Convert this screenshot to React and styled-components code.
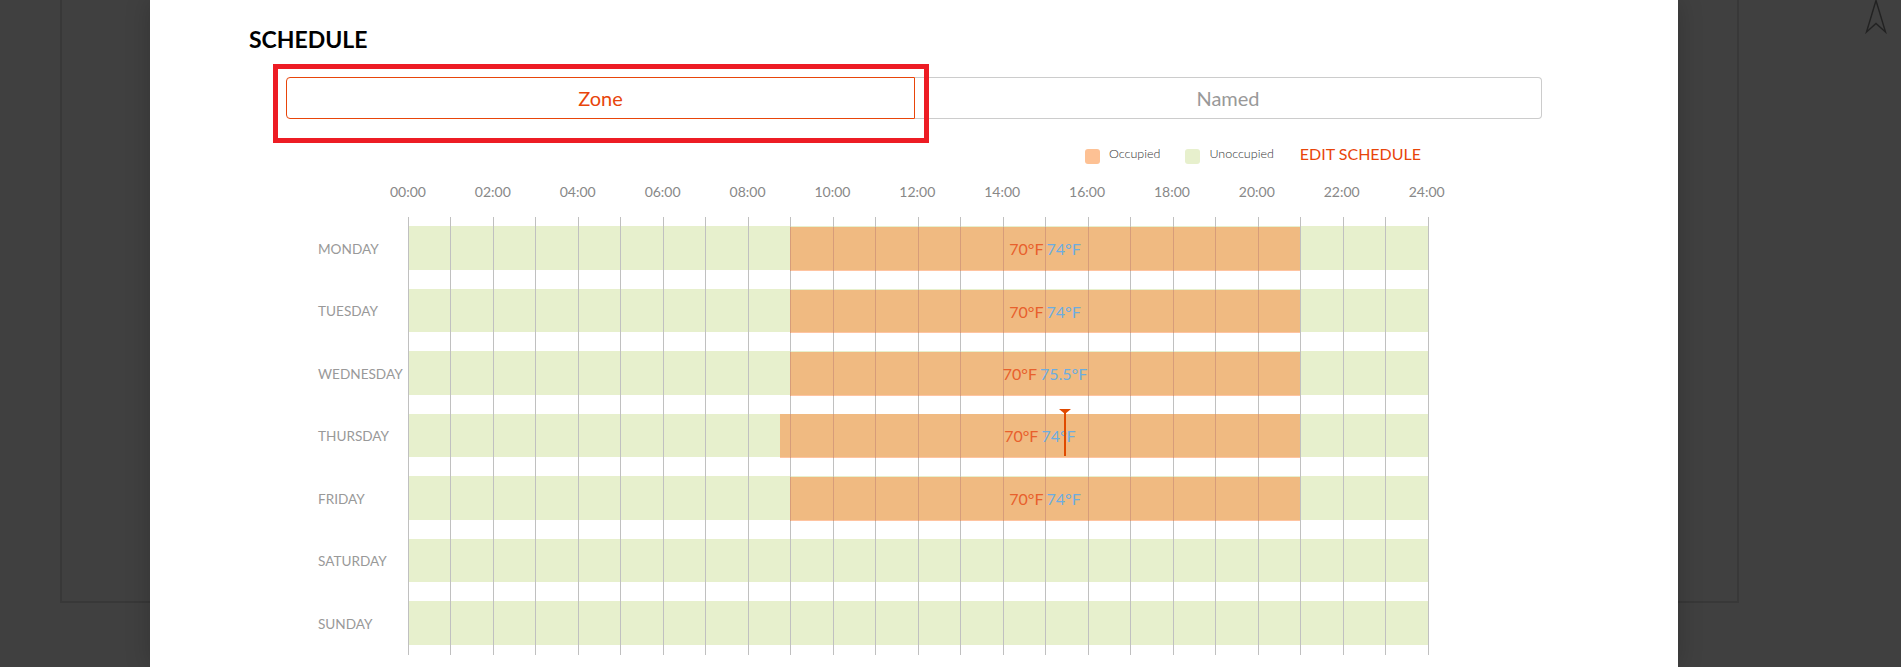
import React from "react";
import styled, { createGlobalStyle } from "styled-components";

const HOUR = 42.5;

const GlobalStyle = createGlobalStyle`
  html, body {
    margin: 0;
    height: 100%;
    overflow: hidden;
    background: #404040;
    font-family: Lato, "Open Sans", sans-serif;
  }
`;

const Page = styled.div`
  position: relative;
  height: 667px;
  background: #404040;
`;

const BackFrame = styled.div`
  position: absolute;
  left: 60px;
  top: -10px;
  width: 1679px;
  height: 613px;
  box-sizing: border-box;
  border: 2px solid #383838;
`;

const CompassIcon = styled.svg`
  position: absolute;
  left: 1864px;
  top: 0;
`;

const Modal = styled.div`
  position: absolute;
  left: 150px;
  top: 0;
  width: 1528px;
  height: 667px;
  box-sizing: border-box;
  padding: 27px 0 0 99px;
  background: #fff;
  box-shadow: 0 0 24px rgba(0, 0, 0, 0.2);
`;

const Title = styled.h2`
  margin: 0;
  font-size: 23px;
  line-height: 24px;
  font-weight: 700;
  color: #000;
`;

const Tabs = styled.div`
  position: relative;
  display: flex;
  width: 1256px;
  height: 42px;
  margin: 26px 0 0 37px;
`;

const Tab = styled.div`
  display: flex;
  align-items: center;
  justify-content: center;
  box-sizing: border-box;
  font-size: 20px;
  width: ${(p) => (p.$active ? "629px" : "627px")};
  color: ${(p) => (p.$active ? "#e8450a" : "#999")};
  border: 1px solid ${(p) => (p.$active ? "#e8450a" : "#ccc")};
  border-left-width: ${(p) => (p.$active ? "1px" : "0")};
  border-radius: ${(p) => (p.$active ? "4px 0 0 4px" : "0 4px 4px 0")};
`;

const Highlight = styled.div`
  position: absolute;
  left: -13px;
  top: -13px;
  width: 656px;
  height: 79px;
  box-sizing: border-box;
  border: 5px solid #ed1c24;
  pointer-events: none;
`;

const Legend = styled.div`
  display: flex;
  align-items: center;
  justify-content: flex-end;
  width: 1172px;
  height: 20px;
  margin-top: 27px;
`;

const Swatch = styled.span`
  width: 15px;
  height: 15px;
  margin-right: 9px;
  border-radius: 3px;
  background: ${(p) => p.$color};
`;

const LegendText = styled.span`
  margin: -6px 25px 0 0;
  font-size: 12.5px;
  font-weight: 300;
  color: #333;
`;

const EditLink = styled.a`
  margin: -6px 0 0 1px;
  font-size: 16px;
  color: #e8450a;
`;

const Hours = styled.div`
  display: flex;
  height: 20px;
  margin: 16px 0 0 116.5px;
`;

const HourLabel = styled.span`
  width: 84.9px;
  flex: none;
  text-align: center;
  font-size: 14px;
  line-height: 20px;
  color: #888;
`;

const Chart = styled.div`
  position: relative;
  margin: 15px 0 0 68.5px;
  width: 1111px;
`;

const Row = styled.div`
  display: flex;
  height: 62.5px;
`;

const DayLabel = styled.div`
  width: 90px;
  padding: 10px 0 0 0.5px;
  box-sizing: border-box;
  height: 53.5px;
  display: flex;
  align-items: center;
  font-size: 13.6px;
  color: #999;
`;

const Track = styled.div`
  position: relative;
  width: 1020px;
  height: 43.5px;
  margin-top: 9px;
  background: #e7f0cd;
`;

const Occupied = styled.div`
  position: absolute;
  z-index: 2;
  top: ${(p) => (p.$early ? "0" : "1px")};
  bottom: -1px;
  left: ${(p) => p.$from * HOUR}px;
  width: ${(p) => (p.$to - p.$from) * HOUR}px;
  display: flex;
  align-items: center;
  justify-content: center;
  gap: 3px;
  background: rgba(255, 95, 0, 0.37);
  font-size: 16px;
`;

const Temp = styled.span`
  color: ${(p) => p.$color};
`;

const GridLines = styled.div`
  position: absolute;
  z-index: 1;
  left: 90px;
  top: 0;
  bottom: 0;
  display: flex;
  pointer-events: none;
`;

const GridLine = styled.span`
  width: ${HOUR}px;
  flex: none;
  box-sizing: border-box;
  border-left: 1px solid #c0c0c0;

  &:last-child {
    width: 1px;
  }
`;

const NowMarker = styled.div`
  position: absolute;
  z-index: 3;
  left: 656.5px;
  top: -5px;
  width: 2px;
  height: 47px;
  background: #e04a00;

  &::before {
    content: "";
    position: absolute;
    left: -5px;
    top: 0;
    border-left: 6px solid transparent;
    border-right: 6px solid transparent;
    border-top: 5px solid #e04a00;
  }
`;

const hours = ["00:00", "02:00", "04:00", "06:00", "08:00", "10:00", "12:00", "14:00", "16:00", "18:00", "20:00", "22:00", "24:00"];

const days = [
  { name: "MONDAY", from: 9, to: 21, cool: "74°F" },
  { name: "TUESDAY", from: 9, to: 21, cool: "74°F" },
  { name: "WEDNESDAY", from: 9, to: 21, cool: "75.5°F" },
  { name: "THURSDAY", from: 8.76, to: 21, cool: "74°F", now: true },
  { name: "FRIDAY", from: 9, to: 21, cool: "74°F" },
  { name: "SATURDAY" },
  { name: "SUNDAY" },
];

export default function App() {
  return (
    <Page>
      <GlobalStyle />
      <BackFrame />
      <CompassIcon width="24" height="34" viewBox="0 0 24 34" fill="none" stroke="#222" strokeWidth="1.4">
        <path d="M12 0.5 L2.5 32 L12 23.5 L21.5 32 Z" />
      </CompassIcon>
      <Modal>
        <Title>SCHEDULE</Title>
        <Tabs>
          <Tab $active>Zone</Tab>
          <Tab>Named</Tab>
          <Highlight />
        </Tabs>
        <Legend>
          <Swatch $color="#fdc194" />
          <LegendText>Occupied</LegendText>
          <Swatch $color="#e7f0cd" />
          <LegendText>Unoccupied</LegendText>
          <EditLink>EDIT SCHEDULE</EditLink>
        </Legend>
        <Hours>
          {hours.map((h) => (
            <HourLabel key={h}>{h}</HourLabel>
          ))}
        </Hours>
        <Chart>
          {days.map((d) => (
            <Row key={d.name}>
              <DayLabel>{d.name}</DayLabel>
              <Track>
                {d.from && (
                  <Occupied $from={d.from} $to={d.to} $early={d.from < 9}>
                    <Temp $color="#e8602c">70°F</Temp>
                    <Temp $color="#6cade0">{d.cool}</Temp>
                  </Occupied>
                )}
                {d.now && <NowMarker />}
              </Track>
            </Row>
          ))}
          <GridLines>
            {Array.from({ length: 25 }, (_, i) => (
              <GridLine key={i} />
            ))}
          </GridLines>
        </Chart>
      </Modal>
    </Page>
  );
}
